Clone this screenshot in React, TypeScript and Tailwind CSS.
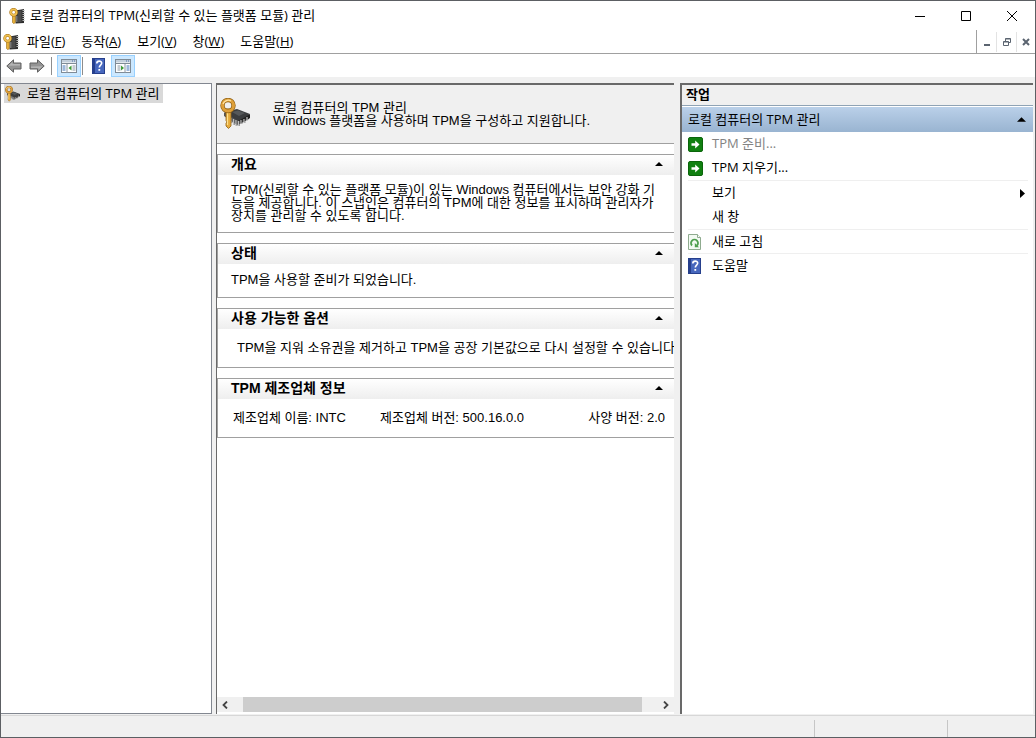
import { useState } from 'react';
import type { ReactNode } from 'react';

interface IconProps {
  className?: string;
}

// Key in front of an upright chip, used in the title bar and menu bar
function TpmIcon({ className }: IconProps) {
  return (
    <svg viewBox="0 0 16 16" className={className} aria-hidden="true">
      <path d="M6.500 2.500L15 1v14l-8.500.500z" fill="#2e2e2e" />
      <path d="M8.500 3l4-.6v11.700l-4 .4z" fill="#4a4a4a" />
      <path d="M13.500 2.500H16M13.500 4.500H16M13.500 6.500H16M13.500 8.500H16M13.500 10.500H16M13.500 12.500H16M7 9h1.500M7 11h1.500M7 13h1.500" stroke="#cfcfcf" strokeWidth=".9" />
      <path d="M3.500 7h2.800v7.500l-1.500 1.200-1.300-1.200z" fill="#e8b23a" stroke="#9a6a12" strokeWidth=".6" />
      <circle cx="4.600" cy="4.200" r="2.900" fill="none" stroke="#a8741a" strokeWidth="2.800" />
      <circle cx="4.600" cy="4.200" r="2.900" fill="none" stroke="#f0c050" strokeWidth="1.800" />
    </svg>
  );
}

// Key with a flat chip lying behind it
function KeyChipIcon({ className }: IconProps) {
  return (
    <svg viewBox="0 0 32 32" className={className} aria-hidden="true">
      <path d="M5 15l13-3 13 5-1 4-12 6-13-9z" fill="#555" />
      <path d="M5 14l13-3 13 5-12 7z" fill="#3b3d3f" />
      <path d="M13 14l6-1.500 7 2.500-6 3z" fill="#55585a" />
      <path d="M31 16v4l-12 7v-4z" fill="#222" />
      <path d="M12 20v5M14.500 21v6M17 22v6M19.500 23v5M22 22v4M25 21v4M28 19v4" stroke="#bdbdbd" strokeWidth="1.300" />
      <path d="M13 20v5M15.500 21v6M18 22v6M20.500 23v5M23 22v4M26 21v4" stroke="#666" strokeWidth=".6" />
      <path d="M7 11h5v17l-2.500 2.500L7 28v-3l1-1-1-1.500z" fill="#e6ab3c" stroke="#8f6115" strokeWidth=".8" />
      <path d="M8.500 13v14" stroke="#ffe08a" strokeWidth="1.200" />
      <circle cx="9" cy="7.500" r="5.500" fill="none" stroke="#8f6115" strokeWidth="4.400" />
      <circle cx="9" cy="7.500" r="5.500" fill="none" stroke="#dfa03a" strokeWidth="3" />
      <path d="M4 6a5.500 5.500 0 0 1 8-3" fill="none" stroke="#ffe3a0" strokeWidth="1.300" />
    </svg>
  );
}

function ArrowIcon({ className }: IconProps) {
  return (
    <svg viewBox="0 0 16 14" className={className} aria-hidden="true">
      <path d="M.8 7L7.500.8V4H15v6H7.500v3.200z" fill="#949494" stroke="#606060" strokeWidth="1" />
      <path d="M2.500 6.800L6.500 3v2H14v1.500z" fill="#b5b5b5" />
    </svg>
  );
}

function PanelIcon({ className, mirrored }: IconProps & { mirrored?: boolean }) {
  return (
    <svg viewBox="0 0 16 14" className={className} aria-hidden="true">
      <rect x=".5" y=".5" width="15" height="13" fill="#fff" stroke="#7f8b96" />
      <path d="M1 1h14v2.500H1z" fill="#c3cfdb" />
      <path d="M11 2h1M13 2h1" stroke="#4a6fa5" />
      <path d="M1 4.500h14" stroke="#7f8b96" />
      {mirrored ? (
        <>
          <path d="M10 5v9M2.500 7h3M2.500 9h3M2.500 11h3" stroke="#8b97a3" />
          <path d="M11.500 7h3M11.500 9h3M11.500 11h3" stroke="#3d72b8" />
          <path d="M6 6.500v5L9 9z" fill="#3e9b37" />
        </>
      ) : (
        <>
          <path d="M6 5v9M11.500 7h3M11.500 9h3M11.500 11h3" stroke="#8b97a3" />
          <path d="M1.500 7h3M1.500 9h3M1.500 11h3" stroke="#3d72b8" />
          <path d="M10.500 6.500v5L7.500 9z" fill="#3e9b37" />
        </>
      )}
    </svg>
  );
}

function HelpIcon({ className }: IconProps) {
  return (
    <svg viewBox="0 0 13 16" className={className} aria-hidden="true">
      <rect x=".5" y=".5" width="12" height="15" fill="#4767bd" stroke="#263f8c" />
      <path d="M1 1h2v14H1z" fill="#263f8c" />
      <path d="M4.800 5.500c0-3.300 4.900-3 4.900-.4 0 2-2.400 2-2.400 4.400" fill="none" stroke="#fff" strokeWidth="1.600" />
      <rect x="6.400" y="11" width="1.800" height="1.800" fill="#fff" />
    </svg>
  );
}

function GoIcon({ className }: IconProps) {
  return (
    <svg viewBox="0 0 15 15" className={className} aria-hidden="true">
      <rect x=".5" y=".5" width="14" height="14" rx="1.500" fill="#108010" stroke="#0b650b" />
      <path d="M3.500 6.300h3.700V3.500l4.300 4-4.300 4V8.700H3.500z" fill="#fff" />
    </svg>
  );
}

function RefreshIcon({ className }: IconProps) {
  return (
    <svg viewBox="0 0 13 16" className={className} aria-hidden="true">
      <path d="M.5.5h9l3 3v12H.5z" fill="#f2faf2" stroke="#8fab8f" />
      <path d="M9.500.5v3h3" fill="#fff" stroke="#8fab8f" />
      <path d="M4 11.500a3.500 3.500 0 1 1 5 0" fill="none" stroke="#4c9e4c" strokeWidth="1.800" />
      <path d="M6.800 9v4.200H11z" fill="#4c9e4c" />
    </svg>
  );
}

function Triangle({ className }: IconProps) {
  return (
    <svg viewBox="0 0 8 4" className={className} aria-hidden="true">
      <path d="M0 4l4-4 4 4z" fill="#000" />
    </svg>
  );
}

const menus = [
  { label: '파일', accessKey: 'F' },
  { label: '동작', accessKey: 'A' },
  { label: '보기', accessKey: 'V' },
  { label: '창', accessKey: 'W' },
  { label: '도움말', accessKey: 'H' },
];

interface SectionProps {
  title: string;
  children: ReactNode;
}

function Section({ title, children }: SectionProps) {
  const [open, setOpen] = useState(true);

  return (
    <section className="border-y border-l border-[#a0a0a0]">
      <h2>
        <button
          onClick={() => setOpen(!open)}
          aria-expanded={open}
          className="flex h-5 w-full items-center justify-between bg-linear-to-b from-white to-[#eeeeee] pr-[11px] pb-[2px] pl-[13px] text-[14px] leading-4 font-bold"
        >
          {title}
          <Triangle className="h-1 w-2" />
        </button>
      </h2>
      {open && children}
    </section>
  );
}

interface ActionProps {
  label: string;
  icon?: ReactNode;
  disabled?: boolean;
  submenu?: boolean;
}

function Action({ label, icon, disabled, submenu }: ActionProps) {
  return (
    <button disabled={disabled} className="flex h-6 w-full items-center disabled:text-[#838383]">
      <span className="flex w-6 shrink-0">{icon}</span>
      <span className="pb-[2px]">{label}</span>
      {submenu && (
        <svg viewBox="0 0 5 9" className="mr-[3px] ml-auto h-[9px] w-[5px]" aria-hidden="true">
          <path d="M0 0l5 4.500L0 9z" fill="#000" />
        </svg>
      )}
    </button>
  );
}

export default function App() {
  return (
    <div className="flex h-screen flex-col overflow-hidden border border-[#5c5f63] bg-[#f0f0f0] font-['Open_Sans','Noto_Sans_CJK_KR',sans-serif] text-[13px] leading-4 text-black">
      <header className="bg-white">
        <div className="flex h-[29px] items-center pl-2">
          <TpmIcon className="h-4 w-4" />
          <h1 className="ml-[5px] pb-[2px]">로컬 컴퓨터의 TPM(신뢰할 수 있는 플랫폼 모듈) 관리</h1>
          <div className="ml-auto flex">
            <button aria-label="최소화" className="flex h-7 w-[46px] items-center justify-center">
              <svg viewBox="0 0 10 10" className="h-[10px] w-[10px]"><path d="M0 5.500h10" stroke="#000" /></svg>
            </button>
            <button aria-label="최대화" className="flex h-7 w-[46px] items-center justify-center">
              <svg viewBox="0 0 10 10" className="h-[10px] w-[10px]"><path d="M.5.5h9v9h-9z" fill="none" stroke="#000" /></svg>
            </button>
            <button aria-label="닫기" className="flex h-7 w-[46px] items-center justify-center">
              <svg viewBox="0 0 10 10" className="h-[10px] w-[10px]"><path d="M0 0l10 10M10 0L0 10" stroke="#000" /></svg>
            </button>
          </div>
        </div>

        <div className="flex h-6 items-center border-b border-[#a0a0a0] pl-[2px]">
          <TpmIcon className="h-4 w-4" />
          <nav className="ml-2 flex gap-4 pb-[2px]">
            {menus.map((menu) => (
              <button key={menu.accessKey}>
                {menu.label}(<u>{menu.accessKey}</u>)
              </button>
            ))}
          </nav>
          <div className="ml-auto flex h-full items-center border-l border-[#a0a0a0] text-[#5b6470]">
            <button aria-label="창 최소화" className="flex h-5 w-5 items-center justify-center border-r border-[#e3e3e3]">
              <svg viewBox="0 0 8 8" className="h-2 w-2"><path d="M1 7h6" stroke="currentColor" strokeWidth="2" /></svg>
            </button>
            <button aria-label="창 복원" className="flex h-5 w-5 items-center justify-center border-r border-[#e3e3e3]">
              <svg viewBox="0 0 8 8" className="h-2 w-2"><path d="M.5 3.500h5v4h-5zM.5 4h5M2.500 3V.5h5v4H6M2.500 1h5" fill="none" stroke="currentColor" /></svg>
            </button>
            <button aria-label="창 닫기" className="flex h-5 w-[18px] items-center justify-center">
              <svg viewBox="0 0 8 8" className="h-2 w-2"><path d="M1 1l6 6M7 1L1 7" stroke="currentColor" strokeWidth="2" /></svg>
            </button>
          </div>
        </div>

        <div className="flex h-[23px] items-center pl-[5px]">
          <button aria-label="뒤로"><ArrowIcon className="h-[14px] w-4" /></button>
          <button aria-label="앞으로" className="ml-[7px]"><ArrowIcon className="h-[14px] w-4 rotate-180" /></button>
          <span className="ml-[6px] h-[18px] w-px bg-[#8d8d8d]" />
          <button aria-label="콘솔 트리 표시" className="ml-[5px] flex h-[22px] w-6 items-center justify-center border border-[#99d1ff] bg-[#cce8ff]">
            <PanelIcon className="h-[14px] w-4" />
          </button>
          <span className="ml-px h-[18px] w-px bg-[#8d8d8d]" />
          <button aria-label="도움말" className="ml-[9px]"><HelpIcon className="h-4 w-[13px]" /></button>
          <button aria-label="작업 창 표시" className="ml-[6px] flex h-[22px] w-6 items-center justify-center border border-[#99d1ff] bg-[#cce8ff]">
            <PanelIcon mirrored className="h-[14px] w-4" />
          </button>
        </div>
      </header>

      <div className="flex min-h-0 flex-1 pt-[6px]">
        <aside className="w-[211px] shrink-0 border border-l-0 border-[#828790] bg-white">
          <button className="ml-[3px] flex h-[19px] items-center bg-[#d9d9d9] pr-1">
            <KeyChipIcon className="h-4 w-[17px]" />
            <span className="ml-[6px] pb-[2px]">로컬 컴퓨터의 TPM 관리</span>
          </button>
        </aside>

        <main className="ml-1 flex min-w-0 flex-1 flex-col overflow-hidden border-t-2 border-l border-[#696969] bg-white font-['Liberation_Sans','Noto_Sans_CJK_KR',sans-serif] text-[13px] leading-[13px]">
          <div className="flex h-[59px] shrink-0 items-center border-b border-[#a0a0a0] bg-[#f0f0f0] pl-[2px]">
            <KeyChipIcon className="h-8 w-8" />
            <p className="ml-[22px]">
              로컬 컴퓨터의 TPM 관리
              <br />
              Windows 플랫폼을 사용하며 TPM을 구성하고 지원합니다.
            </p>
          </div>

          <div className="flex min-h-0 flex-1 flex-col gap-[10px] overflow-hidden pt-[10px] whitespace-nowrap">
            <Section title="개요">
              <p className="px-[13px] pt-2 pb-[10px]">
                TPM(신뢰할 수 있는 플랫폼 모듈)이 있는 Windows 컴퓨터에서는 보안 강화 기
                <br />
                능을 제공합니다. 이 스냅인은 컴퓨터의 TPM에 대한 정보를 표시하며 관리자가
                <br />
                장치를 관리할 수 있도록 합니다.
              </p>
            </Section>
            <Section title="상태">
              <p className="px-[13px] pt-[9px] pb-[11px]">TPM을 사용할 준비가 되었습니다.</p>
            </Section>
            <Section title="사용 가능한 옵션">
              <p className="px-[19px] pt-3 pb-[13px]">
                TPM을 지워 소유권을 제거하고 TPM을 공장 기본값으로 다시 설정할 수 있습니다.
              </p>
            </Section>
            <Section title="TPM 제조업체 정보">
              <div className="flex justify-between pt-3 pr-[9px] pb-[13px] pl-[15px]">
                <span className="w-[147px]">제조업체 이름: INTC</span>
                <span className="flex-1">제조업체 버전: 500.16.0.0</span>
                <span>사양 버전: 2.0</span>
              </div>
            </Section>
          </div>

          <div className="mb-[2px] flex h-[15px] shrink-0 bg-[#f0f0f0]">
            <button aria-label="왼쪽으로 스크롤" className="flex w-[26px] items-center pl-[5px]">
              <svg viewBox="0 0 6 8" className="h-2 w-[6px]"><path d="M5 .5L1.500 4 5 7.500" fill="none" stroke="#444" strokeWidth="1.800" /></svg>
            </button>
            <div className="flex-1 bg-[#cdcdcd]" />
            <button aria-label="오른쪽으로 스크롤" className="flex w-8 items-center justify-end pr-[5px]">
              <svg viewBox="0 0 6 8" className="h-2 w-[6px]"><path d="M1 .5L4.500 4 1 7.500" fill="none" stroke="#444" strokeWidth="1.800" /></svg>
            </button>
          </div>
        </main>

        <aside className="mr-[2px] ml-[6px] w-[353px] shrink-0 border-t-2 border-l-2 border-[#696969] bg-white">
          <h2 className="h-[21px] border-b border-[#8fa3b5] bg-[#f0f0f0] pt-px pl-1 font-bold">작업</h2>
          <button className="mt-px flex h-[25px] w-full items-center justify-between bg-linear-to-b from-[#bad0e9] to-[#99b4d1] pr-[7px] pl-[6px]">
            <span className="pb-[2px]">로컬 컴퓨터의 TPM 관리</span>
            <Triangle className="h-[5px] w-[9px]" />
          </button>
          <div className="divide-y divide-[#efefef] pr-[5px] pl-[6px]">
            <div>
              <Action label="TPM 준비..." icon={<GoIcon className="h-[15px] w-[15px]" />} disabled />
              <Action label="TPM 지우기..." icon={<GoIcon className="h-[15px] w-[15px]" />} />
            </div>
            <div>
              <Action label="보기" submenu />
              <Action label="새 창" />
            </div>
            <Action label="새로 고침" icon={<RefreshIcon className="h-4 w-[13px]" />} />
            <Action label="도움말" icon={<HelpIcon className="h-4 w-[13px]" />} />
          </div>
        </aside>
      </div>

      <footer className="mt-px flex h-[22px] shrink-0 border-t border-[#d7d7d7] pt-1">
        <div className="flex-1" />
        <div className="w-[133px] border-l border-[#c6c6c6]" />
        <div className="w-[88px] border-l border-[#c6c6c6]" />
      </footer>
    </div>
  );
}
